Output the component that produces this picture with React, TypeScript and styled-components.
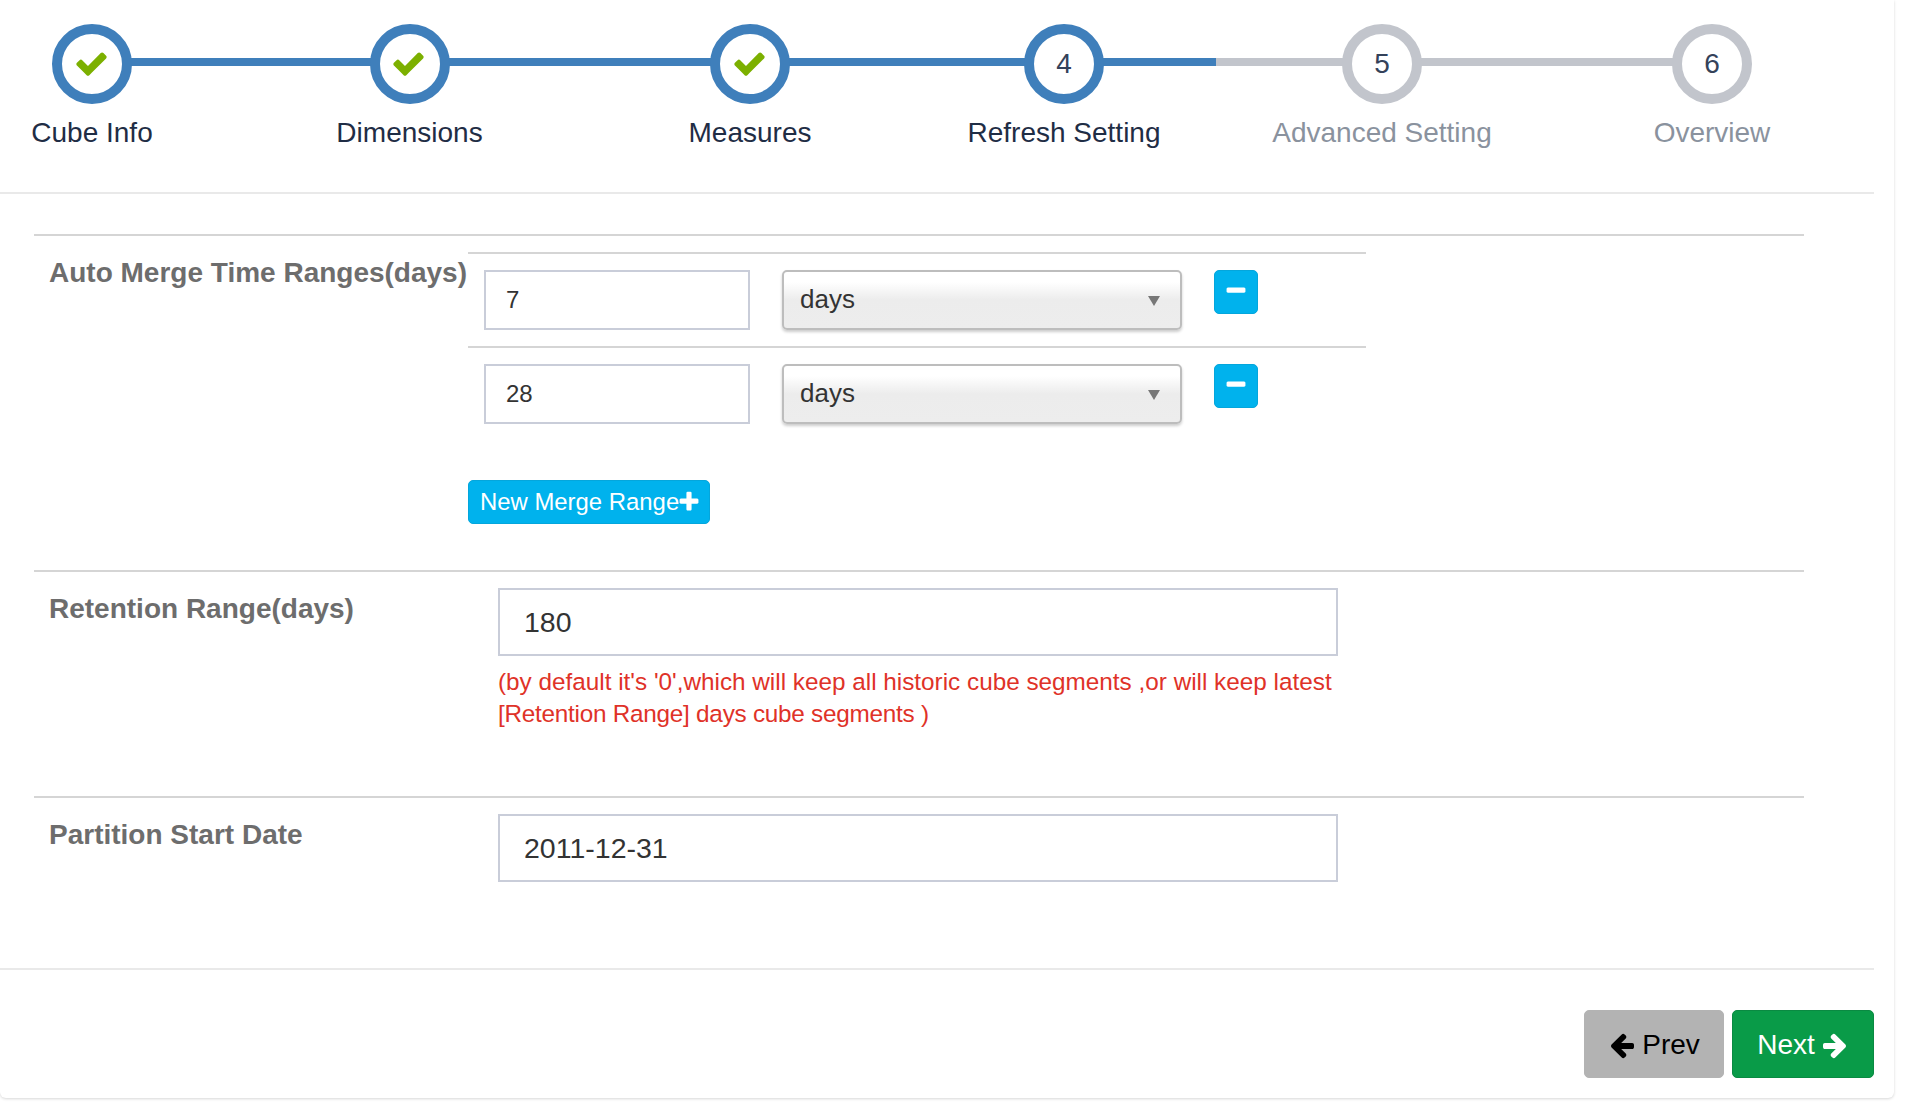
import React from "react";
import styled, { createGlobalStyle } from "styled-components";

const Global = createGlobalStyle`
  html, body { margin: 0; padding: 0; background: #fff; }
  body { font-family: "Liberation Sans", Arial, sans-serif; color: #333; }
  * { box-sizing: border-box; }
`;

const paths = {
  check:
    "M1671 566q0 40-28 68l-724 724-136 136q-28 28-68 28t-68-28l-136-136-362-362q-28-28-28-68t28-68l136-136q28-28 68-28t68 28l294 295 656-657q28-28 68-28t68 28l136 136q28 28 28 68z",
  plus:
    "M1600 736v192q0 40-28 68t-68 28h-416v416q0 40-28 68t-68 28h-192q-40 0-68-28t-28-68v-416h-416q-40 0-68-28t-28-68v-192q0-40 28-68t68-28h416v-416q0-40 28-68t68-28h192q40 0 68 28t28 68v416h416q40 0 68 28t28 68z",
  minus:
    "M1600 736v192q0 40-28 68t-68 28h-1216q-40 0-68-28t-28-68v-192q0-40 28-68t68-28h1216q40 0 68 28t28 68z",
  left:
    "M1664 896v128q0 53-32.5 90.5t-84.5 37.5h-704l293 294q38 36 38 90t-38 90l-75 76q-37 37-90 37-52 0-91-37l-651-652q-37-37-37-90 0-52 37-91l651-650q38-38 91-38 52 0 90 38l75 74q38 38 38 91t-38 91l-293 293h704q52 0 84.5 37.5t32.5 90.5z",
  right:
    "M1600 960q0 54-37 91l-651 651q-39 37-91 37-51 0-90-37l-75-75q-38-38-38-91t38-91l293-293h-704q-52 0-84.5-37.5t-32.5-90.5v-128q0-53 32.5-90.5t84.5-37.5h704l-293-294q-38-36-38-90t38-90l75-75q38-38 90-38 53 0 91 38l651 651q37 35 37 90z",
};

const IconSvg = styled.svg<{ $size: number }>`
  flex: none;
  width: ${(p) => p.$size}px;
  height: ${(p) => p.$size}px;
  fill: currentColor;
`;

const Icon = ({ name, size }: { name: keyof typeof paths; size: number }) => (
  <IconSvg viewBox="0 0 1792 1792" $size={size}>
    <path d={paths[name]} />
  </IconSvg>
);

const Page = styled.div`
  width: 1912px;
  height: 1102px;
  overflow: hidden;
  background: #fff;
`;

const Card = styled.div`
  width: 1894px;
  height: 1098px;
  background: #fff;
  border-radius: 0 0 6px 6px;
  box-shadow: 0 1px 3px rgba(0, 0, 0, 0.16);
`;

const Header = styled.div`
  position: relative;
  width: 1874px;
  height: 194px;
  padding-top: 24px;
  display: flex;
  border-bottom: 2px solid #e9e9e9;
`;

const Rail = styled.div`
  position: absolute;
  left: 92px;
  top: 58px;
  width: 1620px;
  height: 8px;
  background: #c2c5cc;
`;

const RailFill = styled.div`
  height: 100%;
  background: #3f7fbb;
`;

const Step = styled.div<{ $width: number; $offset?: number }>`
  position: relative;
  width: ${(p) => p.$width}px;
  margin-left: ${(p) => p.$offset ?? 0}px;
  display: flex;
  flex-direction: column;
  align-items: center;
`;

const Circle = styled.div<{ $on: boolean }>`
  width: 80px;
  height: 80px;
  border-radius: 50%;
  border: 10px solid ${(p) => (p.$on ? "#3f7fbb" : "#c2c5cc")};
  background: #fff;
  display: flex;
  align-items: center;
  justify-content: center;
  font-size: 28px;
  color: #34425a;
  svg { color: #7cb000; margin: -2px 0 0 -2px; }
`;

const StepLabel = styled.div<{ $on: boolean }>`
  margin-top: 12px;
  font-size: 28px;
  line-height: 34px;
  white-space: nowrap;
  color: ${(p) => (p.$on ? "#1f2d45" : "#8a929e")};
`;

const Section = styled.div<{ $pad: number }>`
  display: flex;
  width: 1770px;
  margin-left: 34px;
  border-top: 2px solid #d5d5d5;
  padding-bottom: ${(p) => p.$pad}px;
`;

const FirstSection = styled(Section)`
  margin-top: 40px;
`;

const Label = styled.div<{ $width: number }>`
  width: ${(p) => p.$width}px;
  flex: none;
  padding: 20px 0 0 15px;
  font-size: 28px;
  line-height: 33px;
  font-weight: 700;
  white-space: nowrap;
  color: #6d6d6d;
`;

const RangeList = styled.div`
  width: 898px;
  padding-top: 16px;
`;

const RangeRow = styled.div`
  display: flex;
  align-items: flex-start;
  gap: 32px;
  border-top: 2px solid #d5d5d5;
  padding: 16px 0 16px 16px;
`;

const ShortInput = styled.div`
  width: 266px;
  height: 60px;
  border: 2px solid #c9cdd9;
  padding-left: 20px;
  font-size: 24px;
  line-height: 56px;
  color: #333;
`;

const Select = styled.div`
  position: relative;
  width: 400px;
  height: 60px;
  padding-left: 16px;
  border: 2px solid #bdbdbd;
  border-radius: 5px;
  font-size: 26px;
  line-height: 54px;
  color: #333;
  background: linear-gradient(to bottom, #fff 18%, #ececec 50%, #ededed 100%);
  box-shadow: 0 2px 3px rgba(0, 0, 0, 0.2);
`;

const Caret = styled.span`
  position: absolute;
  right: 20px;
  top: 24px;
  width: 0;
  height: 0;
  border-left: 6px solid transparent;
  border-right: 6px solid transparent;
  border-top: 10px solid #777;
`;

const MinusButton = styled.button`
  width: 44px;
  height: 44px;
  padding: 0 0 2px;
  border: 1px solid #04a6dc;
  border-radius: 5px;
  background: #00b2ed;
  color: #fff;
  display: flex;
  align-items: center;
  justify-content: center;
`;

const AddButton = styled.button`
  display: flex;
  align-items: center;
  height: 44px;
  width: 242px;
  margin-top: 40px;
  padding: 0 0 0 11px;
  border: 1px solid #04a6dc;
  border-radius: 5px;
  background: #00b2ed;
  color: #fff;
  font-family: inherit;
  font-size: 23.9px;
  white-space: nowrap;
  svg { margin-left: -2px; }
`;

const Field = styled.div`
  width: 840px;
  margin-top: 16px;
`;

const WideInput = styled.div`
  height: 68px;
  border: 2px solid #c9cdd9;
  padding-left: 24px;
  font-size: 28.5px;
  line-height: 64px;
  color: #333;
`;

const Help = styled.div`
  margin-top: 10px;
  font-size: 24.3px;
  line-height: 32px;
  white-space: nowrap;
  color: #df3228;
`;

const HelpLine = styled.div<{ $tight?: boolean }>`
  letter-spacing: ${(p) => (p.$tight ? "-0.25px" : "normal")};
`;

const Footer = styled.div`
  width: 1874px;
  border-top: 2px solid #e9e9e9;
  padding-top: 40px;
  display: flex;
  justify-content: flex-end;
  gap: 8px;
`;

const NavButton = styled.button<{ $primary?: boolean }>`
  display: flex;
  align-items: center;
  justify-content: center;
  gap: 6px;
  width: ${(p) => (p.$primary ? 142 : 140)}px;
  height: 68px;
  padding: 1px 0 0;
  border-radius: 5px;
  border: 1px solid ${(p) => (p.$primary ? "#0a8a42" : "#b3b3b3")};
  background: ${(p) => (p.$primary ? "#099b48" : "#b3b3b3")};
  color: ${(p) => (p.$primary ? "#fff" : "#000")};
  font-family: inherit;
  font-size: 28px;
`;

const steps = [
  { title: "Cube Info", width: 184 },
  { title: "Dimensions", width: 451 },
  { title: "Measures", width: 230 },
  { title: "Refresh Setting", width: 398 },
  { title: "Advanced Setting", width: 238 },
  { title: "Overview", width: 280, offset: 71 },
];
const current = 3;
const ranges = ["7", "28"];

export default function App() {
  return (
    <Page>
      <Global />
      <Card>
        <Header>
          <Rail>
            <RailFill style={{ width: `${(1124 / 1620) * 100}%` }} />
          </Rail>
          {steps.map((s, i) => (
            <Step key={s.title} $width={s.width} $offset={s.offset}>
              <Circle $on={i <= current}>{i < current ? <Icon name="check" size={35} /> : i + 1}</Circle>
              <StepLabel $on={i <= current}>{s.title}</StepLabel>
            </Step>
          ))}
        </Header>
        <FirstSection $pad={46}>
          <Label $width={434}>Auto Merge Time Ranges(days)</Label>
          <RangeList>
            {ranges.map((r) => (
              <RangeRow key={r}>
                <ShortInput>{r}</ShortInput>
                <Select>
                  days
                  <Caret />
                </Select>
                <MinusButton>
                  <Icon name="minus" size={24} />
                </MinusButton>
              </RangeRow>
            ))}
            <AddButton>
              New Merge Range
              <Icon name="plus" size={24} />
            </AddButton>
          </RangeList>
        </FirstSection>
        <Section $pad={66}>
          <Label $width={464}>Retention Range(days)</Label>
          <Field>
            <WideInput>180</WideInput>
            <Help>
              <HelpLine>(by default it's '0',which will keep all historic cube segments ,or will keep latest</HelpLine>
              <HelpLine $tight>[Retention Range] days cube segments )</HelpLine>
            </Help>
          </Field>
        </Section>
        <Section $pad={86}>
          <Label $width={464}>Partition Start Date</Label>
          <Field>
            <WideInput>2011-12-31</WideInput>
          </Field>
        </Section>
        <Footer>
          <NavButton>
            <Icon name="left" size={28} />
            Prev
          </NavButton>
          <NavButton $primary>
            Next
            <Icon name="right" size={28} />
          </NavButton>
        </Footer>
      </Card>
    </Page>
  );
}
